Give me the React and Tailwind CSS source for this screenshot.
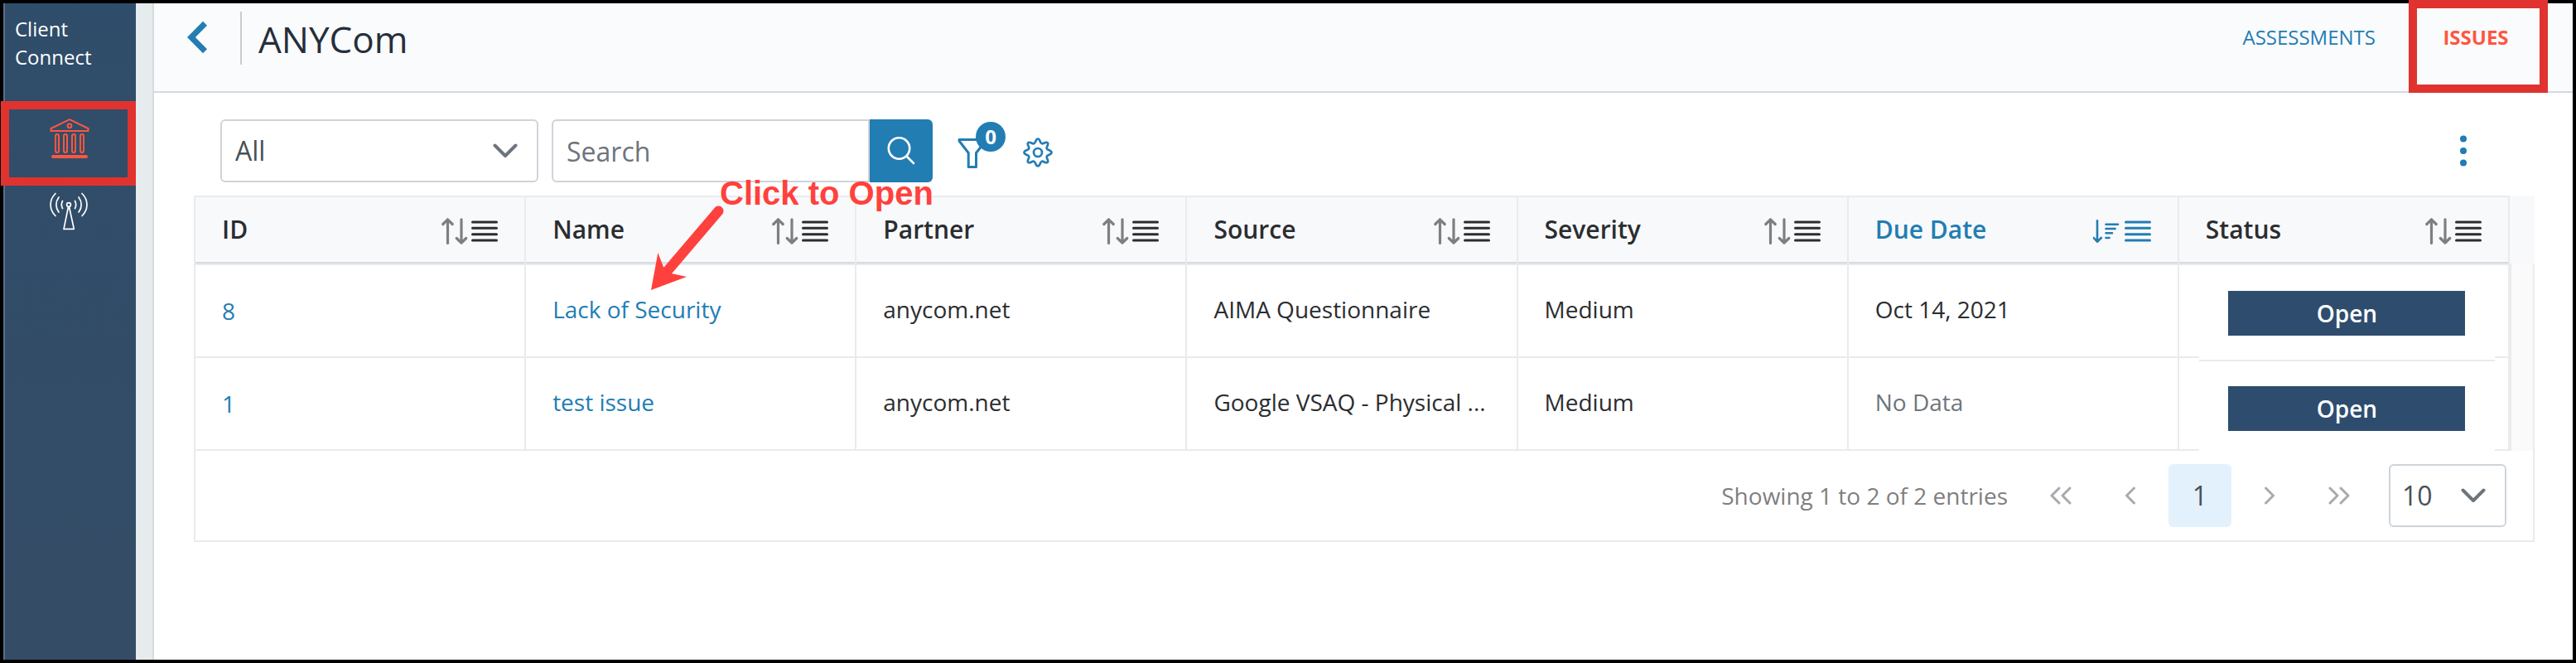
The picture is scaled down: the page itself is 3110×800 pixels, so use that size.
const LINE = "border-[#e9ebee]";

function MenuLines({ color }) {
  return (
    <svg width="32" height="32" viewBox="0 0 32 32" fill="none" stroke={color} strokeWidth="3" strokeLinecap="round" aria-hidden="true">
      <path d="M1.5 5H30.500M1.500 12.300H30.500M1.500 19.700H30.500M1.500 27H30.500" />
    </svg>
  );
}

function SortBoth() {
  return (
    <svg width="32" height="32" viewBox="0 0 32 32" fill="none" stroke="#7f7f7f" strokeWidth="3.2" strokeLinecap="round" strokeLinejoin="round" aria-hidden="true">
      <path d="M7.500 30.400V2M1.800 7.500L7.500 1.800L13.200 7.500" />
      <path d="M24 1.800V30M18.300 24.500L24 30.200L29.700 24.500" />
    </svg>
  );
}

function SortDown() {
  return (
    <svg width="34" height="32" viewBox="0 0 34 32" fill="none" stroke="#227db3" strokeWidth="2.600" strokeLinecap="round" strokeLinejoin="round" aria-hidden="true">
      <path d="M5 3.300V28.500M0.800 24L5 28.700L9.800 24" />
      <path d="M15.500 7.700H30M15.500 13H26.600M15.500 18.300H23M15.500 24H19.500" />
    </svg>
  );
}

function Chevron({ d, w = 30, h = 18, color = "#6c757d", sw = 4 }) {
  return (
    <svg width={w} height={h} viewBox={`0 0 ${w} ${h}`} fill="none" stroke={color} strokeWidth={sw} strokeLinecap="round" strokeLinejoin="round" aria-hidden="true">
      <path d={d} />
    </svg>
  );
}

function BankIcon() {
  return (
    <svg width="48" height="48" viewBox="0 0 48 48" fill="none" stroke="#ff5640" strokeWidth="2" strokeLinecap="round" strokeLinejoin="round" aria-hidden="true">
      <path d="M24 1.200L46.500 12V15H1.500V12Z" />
      <circle cx="24" cy="8.800" r="2.400" />
      <rect x="7" y="19" width="4" height="22" rx="2" />
      <rect x="17" y="19" width="4" height="22" rx="2" />
      <rect x="27" y="19" width="4" height="22" rx="2" />
      <rect x="37" y="19" width="4" height="22" rx="2" />
      <path d="M4 46H44" strokeWidth="4" />
    </svg>
  );
}

function AntennaIcon() {
  return (
    <svg width="48" height="48" viewBox="0 0 48 48" fill="none" stroke="#ffffff" strokeWidth="1.700" strokeLinecap="round" strokeLinejoin="round" aria-hidden="true">
      <circle cx="23" cy="15" r="2.400" />
      <path d="M22.400 18L17 44.300H29.300L23.600 18" />
      <path d="M15.500 10.500C13.900 13.500 13.900 16.500 15.500 19.500M11 6C6.800 11.500 6.800 18.500 11 24M7 1.500C-1 9.500 -1 20.500 7 28.500" />
      <path d="M30.500 10.500C32.100 13.500 32.100 16.500 30.500 19.500M35 6C39.200 11.500 39.200 18.500 35 24M39 1.500C47 9.500 47 20.500 39 28.500" />
    </svg>
  );
}

function GearIcon() {
  return (
    <svg width="36" height="36" viewBox="0 0 36 36" fill="none" stroke="#227db3" strokeWidth="2.700" strokeLinejoin="round" aria-hidden="true">
      <circle cx="18" cy="18" r="5" />
      <path d="M18 1.500C21 1.500 20.300 6.500 22.800 7.300C25 8 27.600 4.300 29.700 6.300C31.700 8.400 28 11 28.700 13.200C29.500 15.700 34.500 15 34.500 18C34.500 21 29.500 20.300 28.700 22.800C28 25 31.700 27.600 29.700 29.700C27.600 31.700 25 28 22.800 28.700C20.300 29.500 21 34.500 18 34.500C15 34.500 15.700 29.500 13.200 28.700C11 28 8.400 31.700 6.300 29.700C4.300 27.600 8 25 7.300 22.800C6.500 20.300 1.500 21 1.500 18C1.500 15 6.500 15.700 7.300 13.200C8 11 4.300 8.400 6.300 6.300C8.400 4.300 11 8 13.200 7.300C15.700 6.500 15 1.500 18 1.500Z" />
    </svg>
  );
}

const COLUMNS = ["ID", "Name", "Partner", "Source", "Severity", "Due Date", "Status"];
const ROWS = [
  { id: "8", name: "Lack of Security", partner: "anycom.net", source: "AIMA Questionnaire", severity: "Medium", due: "Oct 14, 2021" },
  { id: "1", name: "test issue", partner: "anycom.net", source: "Google VSAQ - Physical ...", severity: "Medium", due: null },
];

function Sidebar() {
  return (
    <aside className="flex w-40 shrink-0 flex-col border-l-2 border-[#5a6f86] bg-linear-to-b from-[#2f4d6a] to-[#354c66]">
      <div className="h-[118px] pt-[14px] pl-3 text-2xl leading-[34px] text-white">
        Client
        <br />
        Connect
      </div>
      <nav className="flex flex-col">
        <a href="#institutions" aria-label="Institutions" className="relative flex h-[102px] items-center justify-center pr-[2px] pb-3">
          <BankIcon />
          <span className="pointer-events-none absolute inset-y-0 right-0 -left-[5px] border-10 border-[#e0332f]" />
        </a>
        <a href="#signals" aria-label="Signals" className="flex justify-center pt-2 pr-[2px]">
          <AntennaIcon />
        </a>
      </nav>
    </aside>
  );
}

function Header() {
  return (
    <header className="flex h-27 items-start border-b-2 border-[#d3dadf] bg-[#fafbfd]">
      <button type="button" aria-label="Back" className="mt-[21px] ml-10">
        <svg width="26" height="40" viewBox="0 0 26 40" fill="none" stroke="#227db3" strokeWidth="7" aria-hidden="true">
          <path d="M21.500 3.200L4.900 20L21.500 36.800" />
        </svg>
      </button>
      <div className="mt-[10px] ml-[38px] h-16 w-[2px] bg-[#c9cdd1]" />
      <h1 className="mt-[13px] ml-5 text-[44px] leading-[60px] text-[#252f3a]">ANYCom</h1>
      <nav className="mr-[30px] ml-auto flex text-2xl">
        <a href="#assessments" className="mt-6 mr-10 leading-[34px] text-[#227db3]">ASSESSMENTS</a>
        <a href="#issues" className="relative -mt-1 flex h-28 w-42 justify-center border-10 border-[#e0332f] pt-[18px] pr-1.5 leading-[34px] font-bold text-[#ff5640]">ISSUES</a>
      </nav>
    </header>
  );
}

function Toolbar() {
  return (
    <div className="flex h-[76px] items-center pr-[82px] pl-8">
      <div className="relative">
        <select aria-label="Category" className="h-[76px] w-96 appearance-none rounded-md border-2 border-[#ced4da] bg-white pl-4 text-[32px] text-[#495057]">
          <option>All</option>
        </select>
        <span className="pointer-events-none absolute top-[29px] right-[25px]">
          <Chevron d="M2.500 2.500L15 15L27.500 2.500" />
        </span>
      </div>
      <form className="ml-4 flex" onSubmit={(e) => e.preventDefault()}>
        <input type="search" aria-label="Search" placeholder="Search" className="h-[76px] w-96 rounded-l-md border-2 border-[#ced4da] bg-white pl-4 text-[32px] placeholder:text-[#6c757d]" />
        <button type="submit" aria-label="Submit search" className="flex h-[76px] w-[76px] items-center justify-center rounded-r-md bg-[#227db3]">
          <svg width="36" height="36" viewBox="0 0 36 36" fill="none" stroke="#ffffff" strokeWidth="2.600" strokeLinecap="round" aria-hidden="true">
            <circle cx="15.500" cy="15" r="12.700" />
            <path d="M24.500 24.500L33 33" />
          </svg>
        </button>
      </form>
      <button type="button" aria-label="Filters" className="relative mt-[6px] ml-[30px]">
        <svg width="38" height="38" viewBox="0 0 38 38" fill="none" stroke="#227db3" strokeWidth="3" strokeLinejoin="round" aria-hidden="true">
          <path d="M2 2.500H34V4L22.500 18.500V35.500H13.200V18.500L2 4Z" />
        </svg>
        <span className="absolute -top-[19px] left-[22px] flex size-9 items-center justify-center rounded-full bg-[#227db3] text-2xl font-bold text-white">0</span>
      </button>
      <button type="button" aria-label="Settings" className="mt-1 ml-[41px]">
        <GearIcon />
      </button>
      <button type="button" aria-label="More actions" className="ml-auto">
        <svg width="8" height="40" viewBox="0 0 8 40" fill="#227db3" aria-hidden="true">
          <circle cx="4" cy="5.500" r="4" />
          <circle cx="4" cy="20" r="4" />
          <circle cx="4" cy="34.500" r="4" />
        </svg>
      </button>
    </div>
  );
}

function IssuesTable() {
  return (
    <div className="flex">
      <div className="min-w-0 flex-1">
        <table className={`w-full table-fixed border-separate border-spacing-0 border-l-2 text-[28px] leading-[38px] text-[#2b2d30] ${LINE}`}>
          <thead>
            <tr>
              {COLUMNS.map((c) => (
                <th key={c} scope="col" className={`h-21 border-t-2 border-r-2 bg-[#f8f9fb] p-0 text-left text-[30px] font-semibold ${LINE}`}>
                  <div className={`border-b-2 ${LINE}`}>
                    <div className="flex h-20 items-center justify-between border-b-2 border-[#d3dbe0] px-8">
                      <span className={c === "Due Date" ? "text-[#227db3]" : ""}>{c}</span>
                      <button type="button" aria-label={`Sort by ${c}`} className="mt-1 flex gap-1">
                        {c === "Due Date" ? <SortDown /> : <SortBoth />}
                        <MenuLines color={c === "Due Date" ? "#227db3" : "#2b2d30"} />
                      </button>
                    </div>
                  </div>
                </th>
              ))}
            </tr>
          </thead>
          <tbody>
            {ROWS.map((r, i) => (
              <tr key={r.id}>
                <td className={`h-28 border-r-2 border-b-2 px-8 ${LINE}`}>
                  <a href={`#issue-${r.id}`} className="text-[#227db3]">{r.id}</a>
                </td>
                <td className={`border-r-2 border-b-2 px-8 pb-1 ${LINE}`}>
                  <a href={`#issue-${r.id}`} className="text-[#227db3]">{r.name}</a>
                </td>
                <td className={`border-r-2 border-b-2 px-8 pb-1 ${LINE}`}>{r.partner}</td>
                <td className={`truncate border-r-2 border-b-2 px-8 pb-1 ${LINE}`}>{r.source}</td>
                <td className={`border-r-2 border-b-2 px-8 pb-1 ${LINE}`}>{r.severity}</td>
                <td className={`border-r-2 border-b-2 px-8 pb-1 ${LINE} ${r.due ? "" : "text-[#6c757d]"}`}>{r.due ?? "No Data"}</td>
                <td className={`relative border-r-2 border-b-2 p-0 ${LINE}`}>
                  <div className={i === 0 ? "absolute top-2 right-4 -bottom-[6px] left-6 z-10 border-b-2 border-[#e9ebee] bg-white pt-[23px]" : "absolute top-1 right-4 -bottom-[2px] left-6 bg-white pt-[30px]"}>
                    <button type="button" className="mx-auto block h-[54px] w-[286px] bg-[#2e4d6e] text-[28px] leading-[54px] font-semibold text-white">Open</button>
                  </div>
                </td>
              </tr>
            ))}
          </tbody>
        </table>
      </div>
      <div className="flex w-[30px] flex-col">
        <div className="h-[82px] bg-[#f8f9fb]" />
        <div className={`flex-1 border-r-2 border-l-2 bg-[#fafafa] ${LINE}`} />
      </div>
    </div>
  );
}

function Pagination() {
  const btn = "flex h-[76px] w-[76px] items-center justify-center rounded-md";
  return (
    <div className={`flex h-[110px] items-center justify-end border-r-2 border-b-2 border-l-2 pr-8 ${LINE}`}>
      <span className="mr-[26px] text-[28px] text-[#7f7f7f]">Showing 1 to 2 of 2 entries</span>
      <div className="flex gap-2">
        <button type="button" aria-label="First page" className={btn}>
          <Chevron w={28} h={22} sw={3} color="#a6abb0" d="M12 2L3 11L12 20M25 2L16 11L25 20" />
        </button>
        <button type="button" aria-label="Previous page" className={btn}>
          <Chevron w={14} h={22} sw={3} color="#a6abb0" d="M11.500 2L2.500 11L11.500 20" />
        </button>
        <button type="button" aria-current="page" className="flex h-[76px] w-[76px] items-center justify-center rounded-md bg-[#e3f1fd] text-[32px] text-[#495057]">1</button>
        <button type="button" aria-label="Next page" className={btn}>
          <Chevron w={14} h={22} sw={3} color="#a6abb0" d="M2.500 2L11.500 11L2.500 20" />
        </button>
        <button type="button" aria-label="Last page" className={btn}>
          <Chevron w={28} h={22} sw={3} color="#a6abb0" d="M3 2L12 11L3 20M16 2L25 11L16 20" />
        </button>
      </div>
      <div className="relative ml-[22px]">
        <select aria-label="Rows per page" className="h-[76px] w-[142px] appearance-none rounded-md border-2 border-[#ced4da] bg-white pl-3.5 text-[32px] text-[#495057]">
          <option>10</option>
        </select>
        <span className="pointer-events-none absolute top-[29px] right-[25px]">
          <Chevron d="M2.500 2.500L15 15L27.500 2.500" />
        </span>
      </div>
    </div>
  );
}

function Callout() {
  return (
    <div className="pointer-events-none absolute top-[201px] left-[776px] z-20 text-[#ff413d]">
      <p className="pl-[89px] font-['Liberation_Sans',sans-serif] text-[40px] leading-[56px] font-bold whitespace-nowrap">Click to Open</p>
      <svg className="absolute top-[41px] left-0" width="110" height="110" viewBox="0 0 110 110" fill="#ff413d" aria-hidden="true">
        <path d="M87.500 8.500L24 83" stroke="#ff413d" strokeWidth="12" strokeLinecap="round" />
        <path d="M14.300 59L6 104L49 88L31 84L21 76Z" />
      </svg>
    </div>
  );
}

export default function App() {
  return (
    <div className="relative flex min-h-screen border-4 border-black bg-white font-['Open_Sans','Noto_Sans',sans-serif]">
      <Sidebar />
      <div className="w-[22px] shrink-0 border-r-2 border-[#d5dcdf] bg-[#e6ebed]" />
      <div className="min-w-0 flex-1">
        <Header />
        <main className="pt-8 pr-[46px] pl-12">
          <Toolbar />
          <div className="mt-4">
            <IssuesTable />
            <Pagination />
          </div>
        </main>
      </div>
      <Callout />
    </div>
  );
}
